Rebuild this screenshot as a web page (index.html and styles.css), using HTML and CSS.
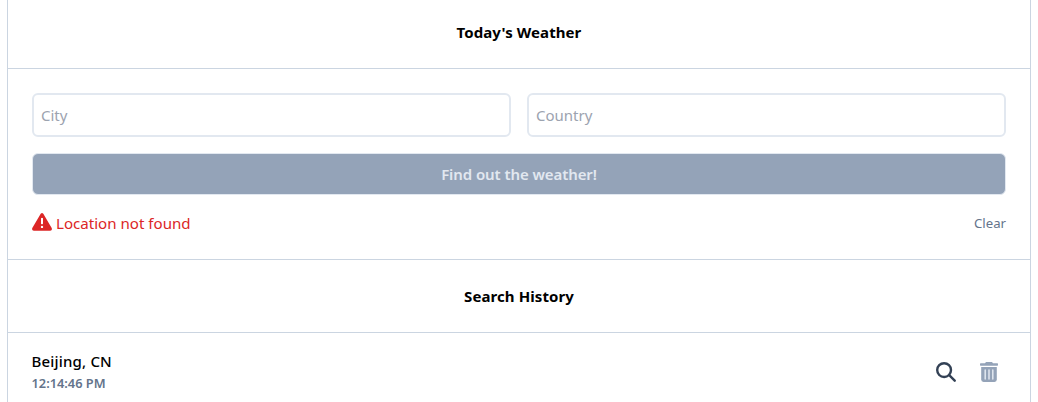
FILE: index.html
```html
<!DOCTYPE html>
<html lang="en">
<head>
<meta charset="utf-8">
<title>Today's Weather</title>
<link rel="stylesheet" href="styles.css">
</head>
<body>
<main class="panel">
  <header class="heading heading-top"><h1 class="title">Today's Weather</h1></header>
  <section class="search">
    <form class="form">
      <div class="fields">
        <input class="field" type="text" placeholder="City">
        <input class="field" type="text" placeholder="Country">
      </div>
      <button class="submit" type="button" disabled>Find out the weather!</button>
    </form>
    <div class="status">
      <div class="error">
        <svg class="warn" viewBox="0 0 20 20"><path fill="currentColor" fill-rule="evenodd" d="M8.700 1.700Q10 .1 11.300 1.700L19.700 16Q20.500 18.500 18.200 18.700H1.800Q-.5 18.500.3 16ZM9 6.200V11.800Q10 12.800 11 11.800V6.200Q10 5.200 9 6.200ZM10 13.700A1.200 1.200 0 1 0 10 16.100A1.200 1.200 0 1 0 10 13.700Z"/></svg>
        <span class="error-text">Location not found</span>
      </div>
      <a class="clear">Clear</a>
    </div>
  </section>
  <header class="heading"><h2 class="title">Search History</h2></header>
  <section class="entry">
    <div class="place">
      <div class="name">Beijing, CN</div>
      <div class="time">12:14:46 PM</div>
    </div>
    <div class="actions">
      <svg class="icon find" viewBox="0 0 20 20" fill="none" stroke="currentColor" stroke-width="2.400" stroke-linecap="round"><circle cx="8.100" cy="8.100" r="6.900"/><path d="M13.200 13.200L18.700 18.700"/></svg>
      <svg class="icon trash" viewBox="0 0 18 20"><path fill="currentColor" d="M6 0H12L13 1.200H17.400Q18 1.200 18 1.900V3.100Q18 3.700 17.400 3.700H.6Q0 3.700 0 3.100V1.900Q0 1.200.6 1.200H5Z"/><path fill="currentColor" d="M1.200 5H16.800V17.600Q16.800 20 14.500 20H3.500Q1.200 20 1.200 17.600Z"/><path class="slats" d="M5.200 8V17M9 8V17M12.800 8V17"/></svg>
    </div>
  </section>
</main>
</body>
</html>
```

FILE: styles.css
```css
*{box-sizing:border-box}
html,body{margin:0;height:100%;overflow:hidden}
body{background:#fff;font-family:"Segoe UI","Noto Sans","Open Sans",sans-serif;font-size:16px;line-height:24px;color:#000}
.panel{margin:0 7px;height:402px;border:solid #cbd5e1;border-width:0 1px;overflow:hidden}
.heading{height:73px;display:flex;align-items:center;justify-content:center;border-bottom:1px solid #cbd5e1}
.heading-top{height:69px;padding-bottom:4px}
.title{margin:0;font-size:15px;letter-spacing:.08px;font-weight:700}
.search{height:191px;padding:24px 24px 0;border-bottom:1px solid #cbd5e1}
.form{display:flex;flex-direction:column;gap:16px}
.fields{display:grid;grid-template-columns:1fr 1fr;gap:16px}
.field{width:100%;height:44px;border:2px solid #e2e8f0;border-radius:6px;padding:8px 7px;font:inherit;font-size:15px;background:#fff}
.field::placeholder{color:#9ca3af;opacity:1}
.submit{height:42px;border:1px solid #e2e8f0;border-radius:6px;background:#94a3b8;color:#e2e8f0;font:inherit;font-size:15px;letter-spacing:-.08px;font-weight:600}
.status{display:flex;justify-content:space-between;align-items:center;margin-top:16px;height:24px}
.error{display:flex;align-items:center;gap:4px;color:#dc2626}
.error-text{font-size:15.100px}
.warn{width:20px;height:20px;margin-bottom:2px}
.clear{font-size:13.200px;color:#64748b}
.entry{display:flex;justify-content:space-between;padding:16px 32px 0 23.500px}
.name{font-size:15px;letter-spacing:.18px;font-weight:500}
.time{font-size:12.800px;line-height:20px;font-weight:600;color:#64748b}
.actions{display:flex;align-items:center;gap:24px;padding-top:2px}
.icon{height:20px}
.find{width:20px;color:#334155}
.trash{width:18px;color:#94a3b8}
.slats{fill:none;stroke:#e2e8f0;stroke-width:1.500;stroke-linecap:round}
```
